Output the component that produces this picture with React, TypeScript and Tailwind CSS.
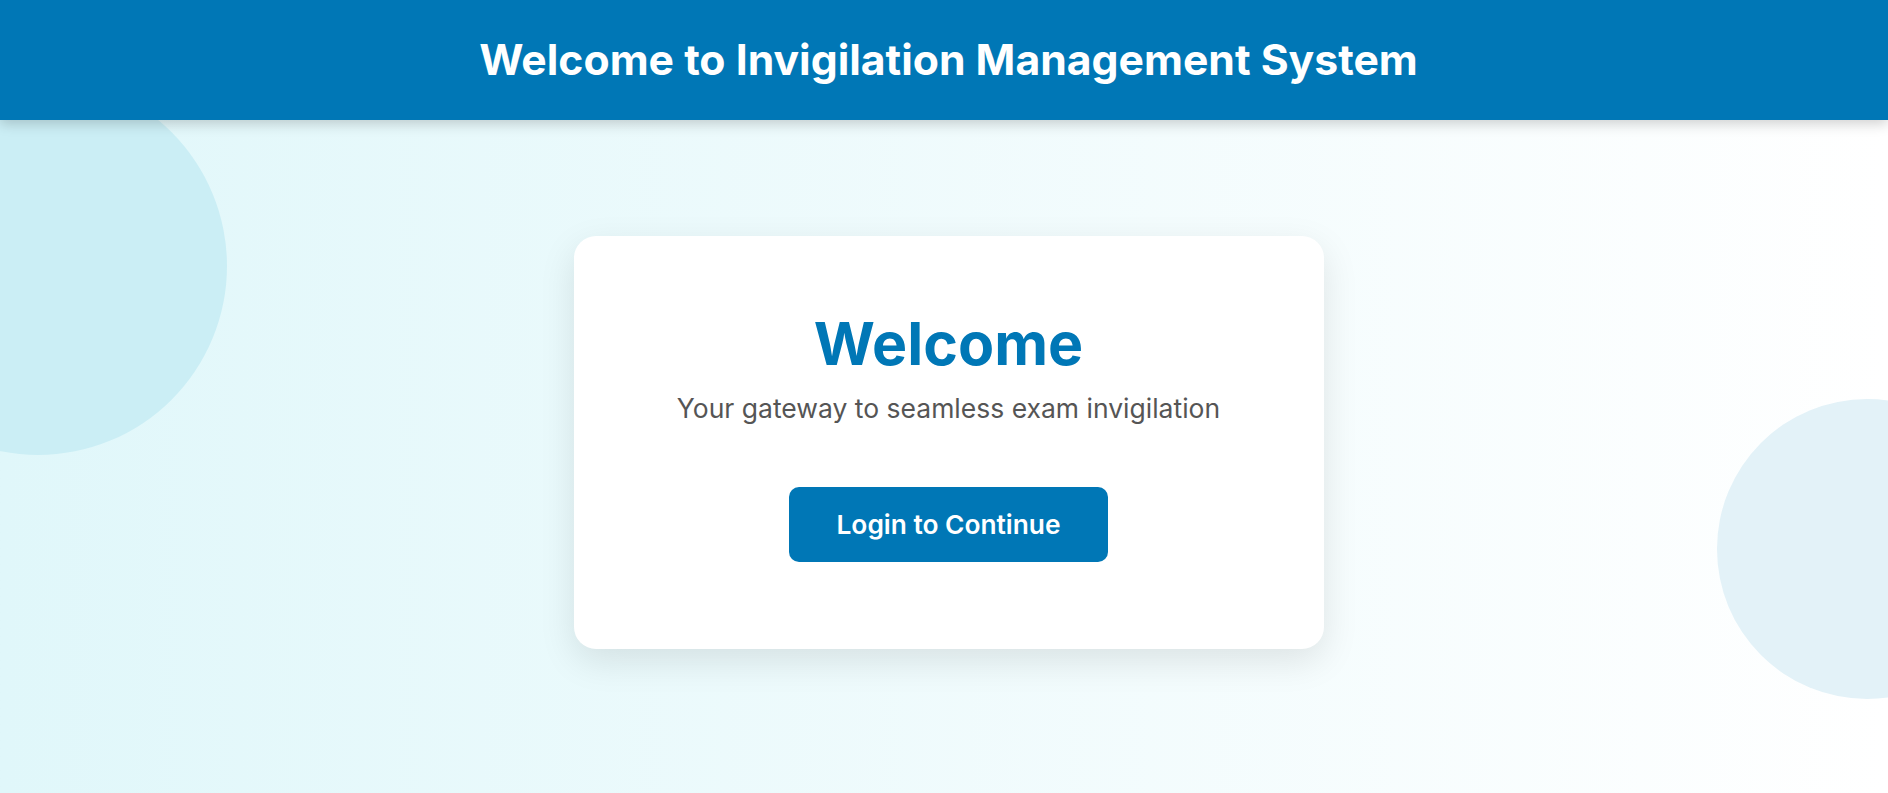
import React from "react";

export default function App() {
  return (
    <div
      className="relative w-full h-[793px] overflow-hidden bg-gradient-to-r from-[#e0f7fa] to-[#ffffff]"
      style={{ fontFamily: "Inter, 'Noto Sans', sans-serif" }}
    >
      <div className="absolute left-[-151px] top-[77px] w-[378px] h-[378px] rounded-full bg-[#cbeef5]" />
      <div className="absolute left-[1717px] top-[399px] w-[300px] h-[300px] rounded-full bg-[#e3f2f8]" />

      <header className="relative z-10 h-[120px] pl-[9px] bg-[#0077b6] flex items-center justify-center shadow-[0_4px_12px_rgba(0,0,0,0.18)]">
        <h1 className="text-white text-[42.7px] font-bold leading-none">
          Welcome to Invigilation Management System
        </h1>
      </header>

      <main className="relative z-10 flex justify-center pt-[116px] pl-[9px]">
        <div className="w-[750px] h-[413px] bg-white rounded-[22px] shadow-[0_12px_36px_rgba(0,0,0,0.1)] flex flex-col items-center pt-[72px]">
          <h2 className="text-[#0077b6] text-[59px] font-bold leading-[normal]">Welcome</h2>
          <p className="mt-[13px] text-[#555555] text-[26.5px] leading-[normal]">
            Your gateway to seamless exam invigilation
          </p>
          <button className="mt-[63px] h-[75px] px-[48px] rounded-[10px] bg-[#0077b6] text-white text-[26.3px] font-semibold">
            Login to Continue
          </button>
        </div>
      </main>
    </div>
  );
}
